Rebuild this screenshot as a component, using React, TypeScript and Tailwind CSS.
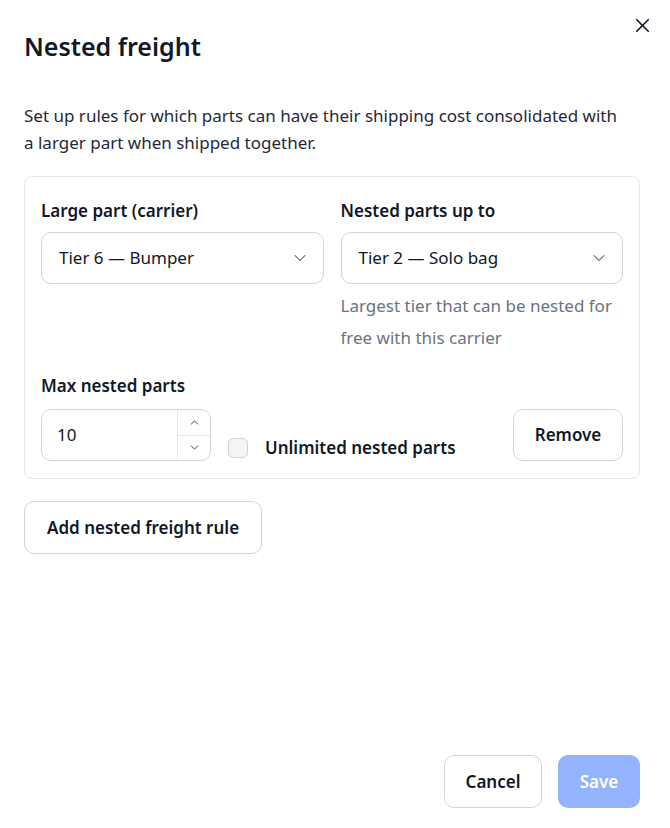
import { X, ChevronDown, ChevronUp } from "lucide-react";

const font = { fontFamily: '"Noto Sans", "Open Sans", sans-serif' };

const Select = ({ value }: { value: string }) => (
  <div className="flex h-[52px] items-center justify-between rounded-[10px] border border-[#d1d5db] pl-[17px] pr-[13px] text-[17px] text-[#111827]">
    <span>{value}</span>
    <ChevronDown size={20} strokeWidth={1.25} className="text-[#4b5563]" />
  </div>
);

export default function App() {
  return (
    <div
      className="relative flex h-[828px] w-[670px] flex-col overflow-hidden bg-white pl-6 pr-[30px] text-[#111827]"
      style={font}
    >
      <button className="absolute right-[16px] top-[14px] text-[#111827]">
        <X size={23} strokeWidth={1.75} />
      </button>

      <h1 className="mt-[28px] text-[25px] font-semibold leading-[36px]">Nested freight</h1>

      <p className="mt-[38px] max-w-[600px] text-[17px] leading-[27px] text-[#1f2937]">
        Set up rules for which parts can have their shipping cost consolidated with a larger part when shipped together.
      </p>

      <div className="mt-[20px] rounded-[8px] border border-[#e5e7eb] px-4 pb-[17px] pt-[19px]">
        <div className="grid grid-cols-2 gap-[17px]">
          <div>
            <div className="mb-[6px] text-[17px] font-semibold leading-[30px]">Large part (carrier)</div>
            <Select value="Tier 6 — Bumper" />
          </div>
          <div>
            <div className="mb-[6px] text-[17px] font-semibold leading-[30px]">Nested parts up to</div>
            <Select value="Tier 2 — Solo bag" />
            <p className="mt-[6px] text-[17px] leading-[32px] text-[#6b7280]">
              Largest tier that can be nested for free with this carrier
            </p>
          </div>
        </div>

        <div className="mt-[17px] text-[17px] font-semibold leading-[30px]">Max nested parts</div>
        <div className="mt-[8px] flex items-center">
          <div className="flex h-[52px] w-[170px] overflow-hidden rounded-[10px] border border-[#d1d5db]">
            <div className="flex flex-1 items-center pl-[15px] text-[17px]">10</div>
            <div className="flex w-[33px] flex-col border-l border-[#e5e7eb] text-[#374151]">
              <div className="flex flex-1 items-center justify-center border-b border-[#e5e7eb]">
                <ChevronUp size={13} strokeWidth={1.75} />
              </div>
              <div className="flex flex-1 items-center justify-center">
                <ChevronDown size={13} strokeWidth={1.75} />
              </div>
            </div>
          </div>
          <label className="ml-[17px] mt-[26px] flex items-center gap-[17px]">
            <span className="h-[20px] w-[20px] rounded-[5px] border border-[#d1d5db] bg-[#f3f4f6]" />
            <span className="text-[17px] font-semibold">Unlimited nested parts</span>
          </label>
          <button className="ml-auto h-[52px] w-[110px] rounded-[10px] border border-[#d1d5db] text-[17px] font-semibold">
            Remove
          </button>
        </div>
      </div>

      <div className="mt-[22px]">
        <button className="h-[53px] rounded-[10px] border border-[#d1d5db] px-[22px] text-[17px] font-semibold">
          Add nested freight rule
        </button>
      </div>

      <div className="mb-[20px] mt-auto flex justify-end gap-4">
        <button className="h-[53px] w-[98px] rounded-[10px] border border-[#d1d5db] text-[17px] font-semibold">
          Cancel
        </button>
        <button className="h-[53px] w-[82px] rounded-[10px] bg-[#93b4fd] text-[17px] font-semibold text-white">
          Save
        </button>
      </div>
    </div>
  );
}
